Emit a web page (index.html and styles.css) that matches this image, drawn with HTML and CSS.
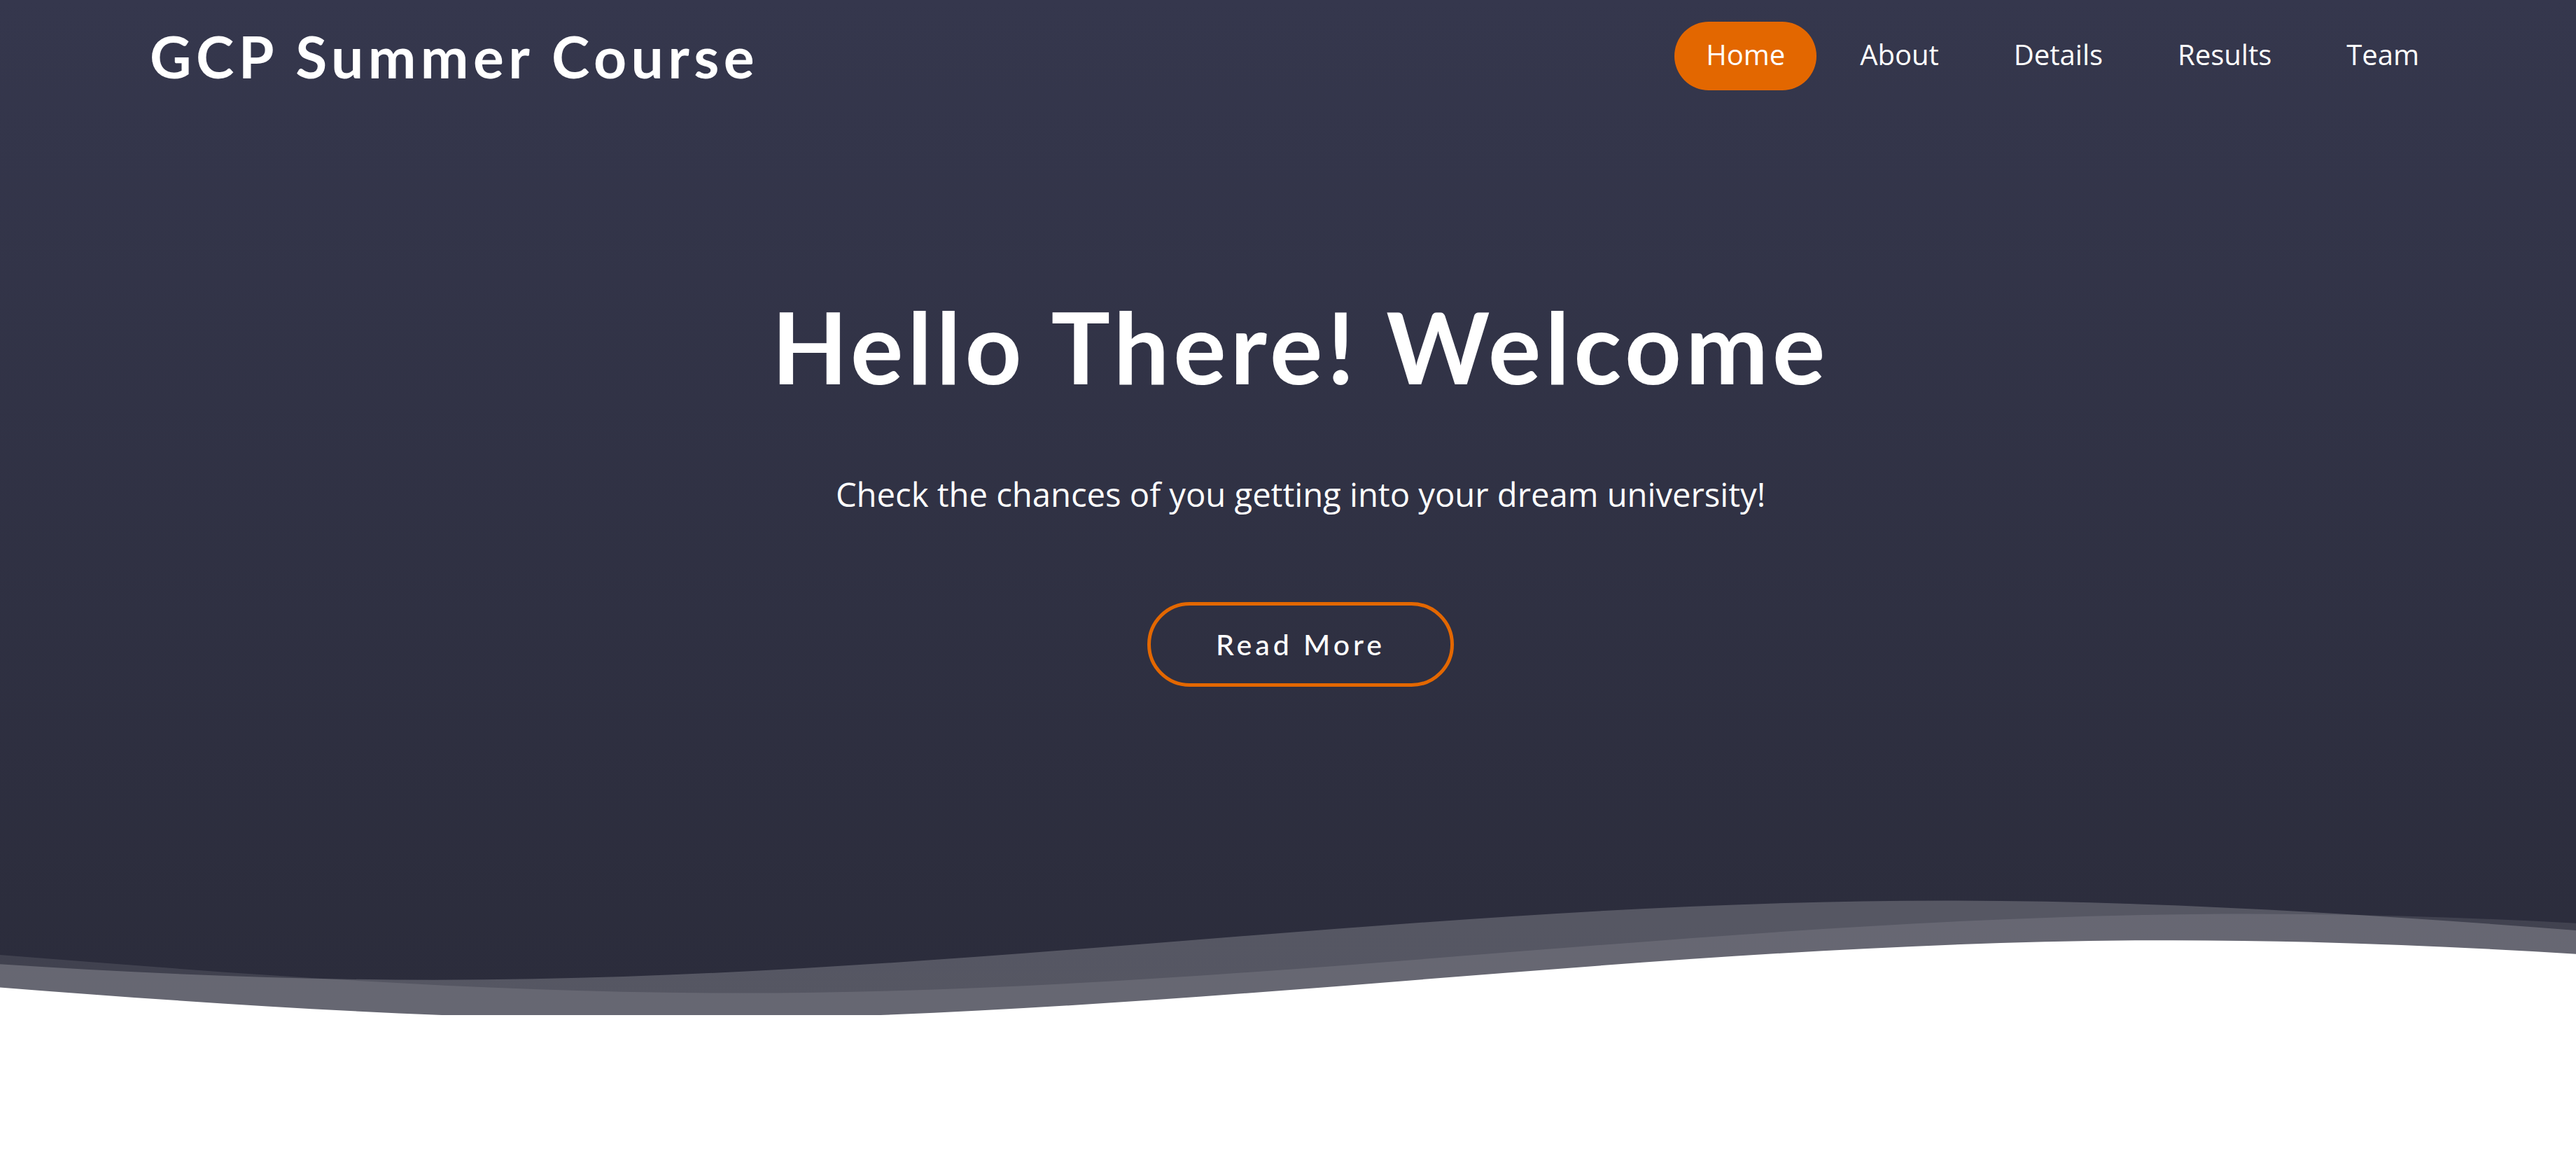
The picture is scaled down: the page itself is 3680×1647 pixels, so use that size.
FILE: index.html
```html
<!DOCTYPE html>
<html lang="en">
<head>
<meta charset="utf-8">
<title>GCP Summer Course</title>
<link rel="stylesheet" href="styles.css">
</head>
<body>
<section class="hero">
  <header class="header">
    <h1 class="logo">GCP Summer Course</h1>
    <nav class="nav">
      <a class="nav-link active" href="#">Home</a>
      <a class="nav-link" href="#">About</a>
      <a class="nav-link" href="#">Details</a>
      <a class="nav-link" href="#">Results</a>
      <a class="nav-link" href="#">Team</a>
    </nav>
  </header>
  <div class="hero-content">
    <h2 class="hero-title">Hello There! Welcome</h2>
    <p class="hero-text">Check the chances of you getting into your dream university!</p>
    <a class="btn-start" href="#">Read More</a>
  </div>
  <svg class="hero-waves" viewBox="0 24 150 28" preserveAspectRatio="none" xmlns="http://www.w3.org/2000/svg">
    <defs>
      <path id="wave-path" d="M-160 44c30 0 58-18 88-18s58 18 88 18 58-18 88-18 58 18 88 18v44h-352z"/>
    </defs>
    <use href="#wave-path" x="27" y="3" fill="rgba(255,255,255,0.1)"/>
    <use href="#wave-path" x="9.3" y="0" fill="rgba(255,255,255,0.2)"/>
    <use href="#wave-path" x="22.5" y="9" fill="#ffffff"/>
  </svg>
</section>
</body>
</html>
```

FILE: styles.css
```css
html, body {
  margin: 0;
  padding: 0;
  background: #ffffff;
}

body {
  font-family: "Open Sans", "Noto Sans", sans-serif;
  color: #ffffff;
}

.hero {
  height: 1450px;
  background: linear-gradient(180deg, #35374d 0%, #2b2c3b 100%);
  display: flex;
  flex-direction: column;
  overflow: hidden;
}

.header {
  height: 160px;
  flex-shrink: 0;
  display: flex;
  align-items: center;
  justify-content: space-between;
  padding: 0 179px 0 214px;
}

.logo {
  margin: 0;
  font-family: "Lato", "Inter", sans-serif;
  font-weight: 700;
  font-size: 82px;
  line-height: 1;
  letter-spacing: 6.5px;
  color: #ffffff;
}

.nav {
  display: flex;
  gap: 17px;
}

.nav-link {
  display: block;
  padding: 0 45px 5px;
  height: 93px;
  line-height: 93px;
  border-radius: 50px;
  font-size: 40px;
  color: #ffffff;
  text-decoration: none;
}

.nav-link.active {
  background: #e36700;
}

.hero-content {
  flex: 1;
  display: flex;
  flex-direction: column;
  align-items: center;
  padding-left: 36px;
}

.hero-title {
  margin: 250px 0 0;
  font-family: "Lato", "Inter", sans-serif;
  font-weight: 700;
  font-size: 141px;
  line-height: 169px;
  letter-spacing: 6px;
  color: #ffffff;
}

.hero-text {
  margin: 91px 0 0;
  font-size: 47.2px;
  line-height: 72px;
  color: #ffffff;
}

.btn-start {
  margin-top: 118px;
  box-sizing: border-box;
  height: 121px;
  padding: 0 93px;
  display: inline-flex;
  align-items: center;
  border: 5px solid #e36700;
  border-radius: 61px;
  font-family: "Lato", "Inter", sans-serif;
  font-weight: 500;
  font-size: 41px;
  letter-spacing: 5px;
  color: #ffffff;
  text-decoration: none;
}

.hero-waves {
  display: block;
  width: 100%;
  height: 176px;
  flex-shrink: 0;
}
```
